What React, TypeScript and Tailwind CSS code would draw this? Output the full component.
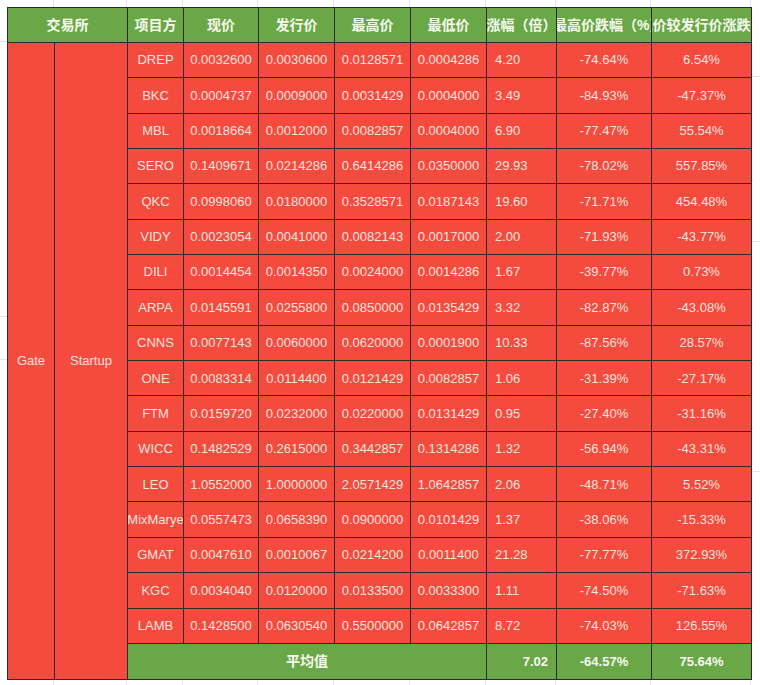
import React from "react";

const rows: string[][] = [
  ["DREP", "0.0032600", "0.0030600", "0.0128571", "0.0004286", "4.20", "-74.64%", "6.54%"],
  ["BKC", "0.0004737", "0.0009000", "0.0031429", "0.0004000", "3.49", "-84.93%", "-47.37%"],
  ["MBL", "0.0018664", "0.0012000", "0.0082857", "0.0004000", "6.90", "-77.47%", "55.54%"],
  ["SERO", "0.1409671", "0.0214286", "0.6414286", "0.0350000", "29.93", "-78.02%", "557.85%"],
  ["QKC", "0.0998060", "0.0180000", "0.3528571", "0.0187143", "19.60", "-71.71%", "454.48%"],
  ["VIDY", "0.0023054", "0.0041000", "0.0082143", "0.0017000", "2.00", "-71.93%", "-43.77%"],
  ["DILI", "0.0014454", "0.0014350", "0.0024000", "0.0014286", "1.67", "-39.77%", "0.73%"],
  ["ARPA", "0.0145591", "0.0255800", "0.0850000", "0.0135429", "3.32", "-82.87%", "-43.08%"],
  ["CNNS", "0.0077143", "0.0060000", "0.0620000", "0.0001900", "10.33", "-87.56%", "28.57%"],
  ["ONE", "0.0083314", "0.0114400", "0.0121429", "0.0082857", "1.06", "-31.39%", "-27.17%"],
  ["FTM", "0.0159720", "0.0232000", "0.0220000", "0.0131429", "0.95", "-27.40%", "-31.16%"],
  ["WICC", "0.1482529", "0.2615000", "0.3442857", "0.1314286", "1.32", "-56.94%", "-43.31%"],
  ["LEO", "1.0552000", "1.0000000", "2.0571429", "1.0642857", "2.06", "-48.71%", "5.52%"],
  ["MixMarye", "0.0557473", "0.0658390", "0.0900000", "0.0101429", "1.37", "-38.06%", "-15.33%"],
  ["GMAT", "0.0047610", "0.0010067", "0.0214200", "0.0011400", "21.28", "-77.77%", "372.93%"],
  ["KGC", "0.0034040", "0.0120000", "0.0133500", "0.0033300", "1.11", "-74.50%", "-71.63%"],
  ["LAMB", "0.1428500", "0.0630540", "0.5500000", "0.0642857", "8.72", "-74.03%", "126.55%"],
];

const widths = [47, 73, 56, 75, 76, 76, 76, 70, 95, 100];
const headers = ["项目方", "现价", "发行价", "最高价", "最低价", "涨幅（倍）"];

const font = { fontFamily: '"Liberation Sans", "Noto Sans CJK SC", sans-serif' };

function Clip({ children, className = "" }: { children: React.ReactNode; className?: string }) {
  return <div className={"flex justify-center overflow-hidden whitespace-nowrap " + className}>{children}</div>;
}

function GridStrip({ h }: { h: string }) {
  return (
    <div className={"flex " + h}>
      <div className="w-[7px] shrink-0" />
      {widths.map((w, i) => (
        <div key={i} className="shrink-0 border-r border-[#e6e6e6]" style={{ width: w }} />
      ))}
    </div>
  );
}

export default function App() {
  return (
    <div className="w-[760px] h-[685px] bg-white overflow-hidden" style={font}>
      <GridStrip h="h-[7px]" />
      <div className="flex">
        <div className="w-[7px] shrink-0 flex flex-col">
          <div className="h-[35px] border-b border-[#e6e6e6]" />
          <div className="h-[275px] border-b border-[#e6e6e6]" />
          <div className="h-[43px] border-b border-[#e6e6e6]" />
        </div>
        <table className="table-fixed border-collapse w-[744px] h-[673px] border border-[#2b2b2b] shrink-0">
          <colgroup>
            {widths.map((w, i) => (
              <col key={i} style={{ width: w }} />
            ))}
          </colgroup>
          <tbody>
            <tr className="h-[35px] bg-[#6aa747] text-[#f6faef] font-bold text-[14px]">
              <td colSpan={2} className="border border-[#2b2b2b] p-0">
                <Clip>交易所</Clip>
              </td>
              {headers.map((h) => (
                <td key={h} className="border border-[#2b2b2b] p-0">
                  <Clip>{h}</Clip>
                </td>
              ))}
              <td className="border border-[#2b2b2b] p-0">
                <div className="overflow-hidden whitespace-nowrap">
                  <span className="block -ml-[4px]">最高价跌幅（%）</span>
                </div>
              </td>
              <td className="border border-[#2b2b2b] p-0">
                <Clip>现价较发行价涨跌幅</Clip>
              </td>
            </tr>
            {rows.map((r, i) => (
              <tr key={r[0]} className="bg-[#f44b3e] text-[#fde3de] text-[13px]">
                {i === 0 && (
                  <>
                    <td rowSpan={18} className="border border-[#2b2b2b] p-0">
                      <Clip>Gate</Clip>
                    </td>
                    <td rowSpan={18} className="border border-[#2b2b2b] p-0">
                      <Clip>Startup</Clip>
                    </td>
                  </>
                )}
                {r.map((c, j) => (
                  <td key={j} className="border border-[#2b2b2b] p-0">
                    {j === 5 ? (
                      <div className="pl-[8px] whitespace-nowrap overflow-hidden">{c}</div>
                    ) : (
                      <Clip>{c}</Clip>
                    )}
                  </td>
                ))}
              </tr>
            ))}
            <tr className="h-[36px] bg-[#6aa747] text-[#f6faef] font-bold text-[13px]">
              <td colSpan={5} className="border border-[#2b2b2b] p-0 text-[14px]">
                <Clip>平均值</Clip>
              </td>
              <td className="border border-[#2b2b2b] p-0">
                <div className="text-right pr-[8px]">7.02</div>
              </td>
              <td className="border border-[#2b2b2b] p-0">
                <Clip>-64.57%</Clip>
              </td>
              <td className="border border-[#2b2b2b] p-0">
                <Clip>75.64%</Clip>
              </td>
            </tr>
          </tbody>
        </table>
        <div className="w-[9px] shrink-0 flex flex-col">
          <div className="h-[70px] border-b border-[#e6e6e6]" />
          <div className="h-[165px] border-b border-[#e6e6e6]" />
          <div className="h-[230px] border-b border-[#e6e6e6]" />
        </div>
      </div>
      <GridStrip h="h-[6px]" />
    </div>
  );
}
